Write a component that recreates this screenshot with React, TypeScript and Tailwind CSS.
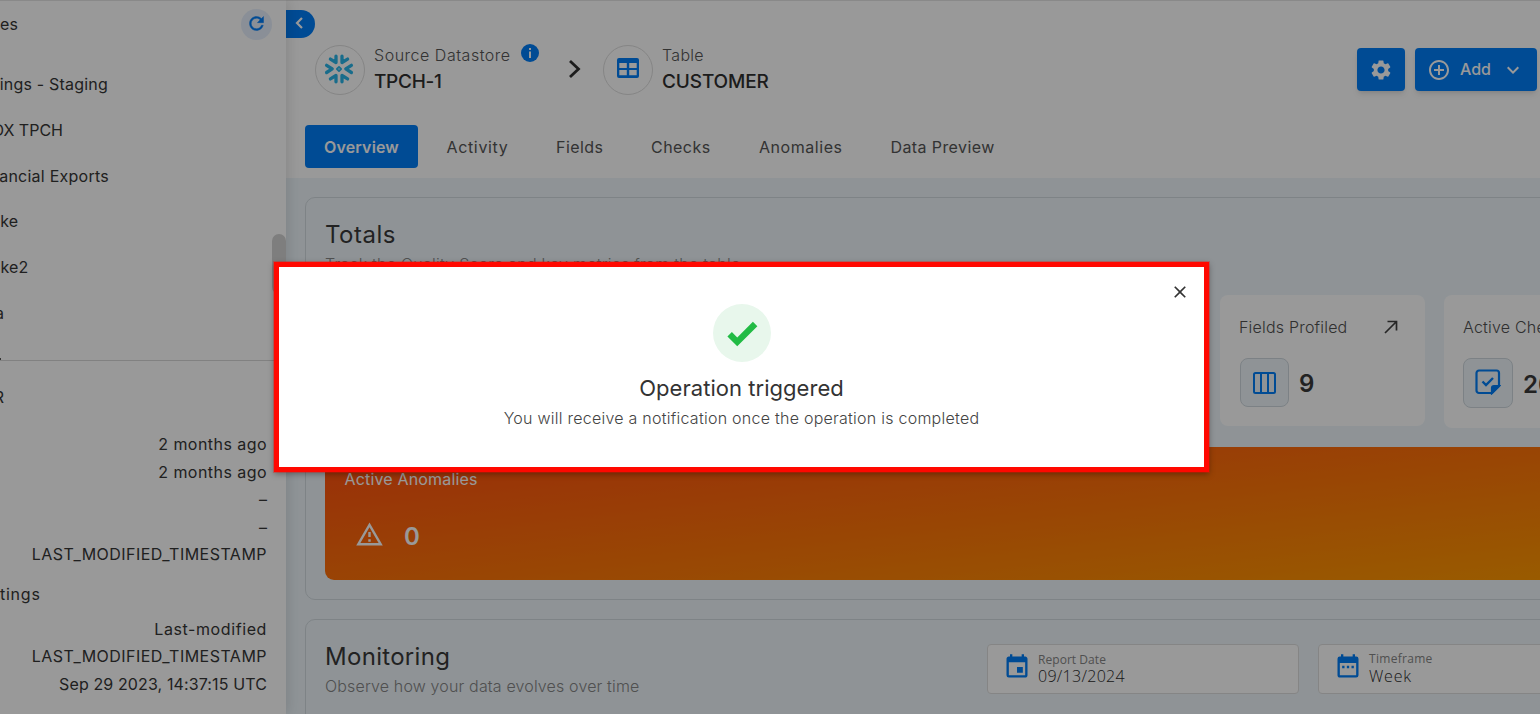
import React from "react";
import { MdSettings, MdControlPoint, MdKeyboardArrowDown, MdEvent, MdClose } from "react-icons/md";

const BLUE = "text-[#007df7]";

function SnowflakeLogo() {
  return (
    <svg width="30" height="30" viewBox="-15 -15 30 30" fill="none" stroke="#29b5e8" strokeWidth="3.3" strokeLinecap="round" strokeLinejoin="round">
      <path d="M-12.400 -3.700L-6.800 -.1L-12.400 3.500M12.400 -3.700L6.800 -.1L12.400 3.500" />
      <path d="M-3 -12.800V-6.500L-8.600 -9.900M3 -12.800V-6.500L8.600 -9.900M-3 12.800V6.500L-8.600 9.900M3 12.800V6.500L8.600 9.900" />
      <path d="M0 -2.100L2.100 0L0 2.100L-2.100 0Z" strokeWidth="1.800" />
    </svg>
  );
}

function RefreshIcon() {
  return (
    <svg width="21" height="21" viewBox="0 0 24 24" fill="currentColor" stroke="currentColor" strokeWidth="0.5">
      <path d="M17.650 6.350C16.200 4.900 14.210 4 12 4c-4.420 0-7.990 3.580-7.990 8s3.570 8 7.990 8c3.730 0 6.840-2.550 7.730-6h-2.080c-.82 2.330-3.040 4-5.650 4-3.310 0-6-2.690-6-6s2.690-6 6-6c1.660 0 3.140.69 4.220 1.780L13 11h7V4l-2.350 2.350z" />
    </svg>
  );
}

function TableIcon() {
  return (
    <svg width="22" height="20" viewBox="0 0 22 20" fill="#007df7" fillRule="evenodd">
      <path d="M2 0H20A2 2 0 0 1 22 2V18A2 2 0 0 1 20 20H2A2 2 0 0 1 0 18V2A2 2 0 0 1 2 0ZM2.300 5V10H9.800V5ZM12.200 5V10H19.700V5ZM2.300 12V17.300H9.800V12ZM12.200 12V17.300H19.700V12Z" />
    </svg>
  );
}

function ColumnsIcon() {
  return (
    <svg width="23" height="22" viewBox="0 0 23 22" fill="none" stroke="#007df7" strokeWidth="2">
      <rect x="1" y="1" width="21" height="20" rx="1.500" />
      <path d="M8 1V21M15 1V21" />
    </svg>
  );
}

function CheckNoteIcon() {
  return (
    <svg width="26" height="26" viewBox="0 0 26 26" fill="none" stroke="#007df7" strokeWidth="2.200">
      <path d="M17 24H4A2.500 2.500 0 0 1 1.500 21.500V4A2.500 2.500 0 0 1 4 1.500H21.500A2.500 2.500 0 0 1 24 4V17Z" />
      <path d="M17 24V19A2 2 0 0 1 19 17H24Z" fill="#007df7" />
      <path d="M7.500 12.500L11 16L18 9" strokeWidth="2.400" />
    </svg>
  );
}

function CalendarWeekIcon() {
  return (
    <svg width="28" height="28" viewBox="0 0 24 24" fill="#007df7">
      <path d="M19 3h-1V1h-2v2H8V1H6v2H5a2 2 0 0 0-2 2v14c0 1.100.9 2 2 2h14a2 2 0 0 0 2-2V5a2 2 0 0 0-2-2zm0 16H5V8.500h14V19zM7 11h2v2H7zM11 11h2v2h-2zM15 11h2v2h-2z" />
    </svg>
  );
}

const sources = [
  { text: "ings - Staging", w: "w-[108px] tracking-[0.2px]" },
  { text: "DX TPCH", w: "w-[63px]" },
  { text: "ancial Exports", w: "w-[109px] tracking-[0.25px]" },
  { text: "ke", w: "w-[18.5px] tracking-[0.3px]" },
  { text: "ke2", w: "w-[28.5px] tracking-[0.2px]" },
  { text: "a", w: "w-[4px]" },
];

const details = [
  { text: "2 months ago", track: "tracking-[0.45px]" },
  { text: "2 months ago", track: "tracking-[0.45px]" },
  { text: "–", track: "tracking-normal" },
  { text: "–", track: "tracking-normal" },
  { text: "LAST_MODIFIED_TIMESTAMP", track: "tracking-[0.47px]" },
];

const settings = [
  { text: "Last-modified", track: "tracking-[0.6px]" },
  { text: "LAST_MODIFIED_TIMESTAMP", track: "tracking-[0.47px]" },
  { text: "Sep 29 2023, 14:37:15 UTC", track: "tracking-[0.12px]" },
];

function Sidebar() {
  return (
    <aside className="z-10 flex w-[286px] shrink-0 flex-col overflow-hidden bg-white text-base text-[#363636] shadow-[2px_0_12px_rgba(0,0,0,0.12)]">
      <div className="relative flex h-[360px] flex-col">
        <div className="flex h-[48px] shrink-0 items-center justify-between pr-[14px]">
          <span className="tracking-[0.2px]">es</span>
          <span className={`flex size-[31px] items-center justify-center rounded-full bg-[#e6effc] pb-[2px] ${BLUE}`}>
            <RefreshIcon />
          </span>
        </div>
        <ul className="flex flex-col pt-[13.500px]">
          {sources.map((s) => (
            <li key={s.text} className="flex h-[45.700px] items-center">
              <span className={`flex justify-end overflow-hidden whitespace-nowrap ${s.w}`}>{s.text}</span>
            </li>
          ))}
        </ul>
        <span className="absolute top-[358px] left-0 h-[2px] w-px bg-[#555]" />
        <span className="absolute top-[234px] right-0 h-[60px] w-[14px] rounded-full bg-[#d2d2d2]" />
      </div>
      <div className="flex flex-col border-t border-[#d8d8d8] pr-[19px] leading-[27.500px]">
        <span className="mt-[23px] flex h-[28px] w-[4px] justify-end overflow-hidden">R</span>
        <div className="mt-[19px] flex flex-col items-end">
          {details.map((d, i) => (
            <span key={i} className={d.track}>{d.text}</span>
          ))}
        </div>
        <span className="mt-[12px] tracking-[0.75px]">tings</span>
        <div className="mt-[7.500px] flex flex-col items-end">
          {settings.map((d) => (
            <span key={d.text} className={d.track}>{d.text}</span>
          ))}
        </div>
      </div>
    </aside>
  );
}

function Header() {
  return (
    <header className="relative flex h-[178px] shrink-0 flex-col bg-white">
      <span className="absolute top-[10px] left-0 flex h-[28px] w-[29px] items-center justify-center rounded-r-full bg-[#007df7] pr-[3px] pb-[2px] text-white">
        <svg width="8" height="12" viewBox="0 0 8 12" fill="none" stroke="currentColor" strokeWidth="2.200">
          <path d="M7 1L2 6L7 11" />
        </svg>
      </span>
      <div className="flex h-[95px] items-end pl-[29px]">
        <span className="flex size-[50px] items-center justify-center rounded-full border border-[#dedede] pr-[2px] pb-[2px]">
          <SnowflakeLogo />
        </span>
        <div className="ml-[9px] flex h-[50px] w-[166px] flex-col">
          <div className="flex h-[20px] items-center text-[#555]">
            <span className="w-[147px] text-base font-light tracking-[0.52px]">Source Datastore</span>
            <span className="-mt-[4px] flex size-[18px] shrink-0 items-center justify-center rounded-full bg-[#007df7]">
              <svg width="4" height="10" viewBox="0 0 4 10" fill="#fff">
                <path d="M1 0H3V2H1ZM1 3.500H3V10H1Z" />
              </svg>
            </span>
          </div>
          <span className="mt-[2px] text-[19px] leading-[30px] font-medium tracking-[-0.3px] text-[#2f2f2f]">TPCH-1</span>
        </div>
        <svg className="mb-[16px] ml-[28px] shrink-0" width="14" height="20" viewBox="0 0 14 20" fill="none" stroke="#303030" strokeWidth="2.800">
          <path d="M2 2L10.500 10L2 18" />
        </svg>
        <span className="ml-[21px] flex size-[50px] items-center justify-center rounded-full border border-[#dedede] pb-[4px]">
          <TableIcon />
        </span>
        <div className="ml-[9px] flex h-[50px] flex-col">
          <span className="h-[21px] text-base leading-[21px] font-light tracking-[0.3px] text-[#555]">Table</span>
          <span className="mt-[1px] text-[19px] leading-[30px] font-medium tracking-[-0.12px] text-[#2f2f2f]">CUSTOMER</span>
        </div>
        <div className="mr-[3px] mb-[4px] ml-auto flex gap-[10px] text-white">
          <span className="flex h-[43px] w-[48px] items-center justify-center rounded-[4px] bg-[#007df7] shadow-md">
            <MdSettings size={24} />
          </span>
          <span className="flex h-[43px] w-[122px] items-center rounded-[4px] bg-[#007df7] pl-[12px] shadow-md">
            <MdControlPoint size={24} />
            <span className="-mt-[2px] ml-[9px] w-[40px] text-base font-medium">Add</span>
            <MdKeyboardArrowDown size={24} className="ml-[1px]" />
          </span>
        </div>
      </div>
      <nav className="mt-[30px] ml-[19px] flex h-[43px] items-center text-base tracking-[0.45px] text-[#555]">
        <span className="flex h-[43px] w-[113px] items-center justify-center rounded-[4px] bg-[#007df7] font-semibold tracking-[0.15px] text-white">Overview</span>
        <span className="ml-[28.500px] w-[109.500px] tracking-[0.65px]">Activity</span>
        <span className="w-[95px]">Fields</span>
        <span className="w-[108px]">Checks</span>
        <span className="w-[131.500px] tracking-[0.55px]">Anomalies</span>
        <span className="tracking-[0.4px]">Data Preview</span>
      </nav>
    </header>
  );
}

function TotalsPanel() {
  return (
    <section className="flex h-[403px] w-[1400px] shrink-0 flex-col rounded-[10px] border border-[#d3dbe0] pt-[22px] pl-[19px]">
      <h2 className="text-2xl leading-[30px] tracking-[0.5px] text-[#3a3a3a]">Totals</h2>
      <p className="mt-[3px] text-base leading-[22px] font-light tracking-[0.23px] text-[#858585]">Track the Quality Score and key metrics from the table</p>
      <div className="mt-[20px] flex h-[133px] items-start pl-[895px]">
        <div className="h-[131px] w-[205px] rounded-[8px] bg-white pt-[20px] pl-[20px]">
          <div className="flex h-[24px] items-center text-[#505050]">
            <span className="-ml-[1px] w-[144px] font-light tracking-[0.2px]">Fields Profiled</span>
            <svg width="16" height="16" viewBox="0 0 16 16" fill="none" stroke="#404040" strokeWidth="1.700">
              <path d="M2 14L13 3M4.500 2.500H13.500V11.500" />
            </svg>
          </div>
          <div className="mt-[19px] flex items-center">
            <span className="flex size-[49px] items-center justify-center rounded-[8px] border border-[#cfd8de] bg-[#eef6fb] pr-[1px]">
              <ColumnsIcon />
            </span>
            <span className="mt-[2px] ml-[10px] text-2xl font-semibold text-[#3a3a3a]">9</span>
          </div>
        </div>
        <div className="ml-[19px] h-[133px] w-[205px] rounded-[8px] bg-white pt-[20px] pl-[19px]">
          <div className="flex h-[24px] items-center font-light tracking-[0.2px] text-[#505050]">Active Checks</div>
          <div className="mt-[19px] flex items-center">
            <span className="flex size-[50px] items-center justify-center rounded-[8px] border border-[#cfd8de] bg-[#eef6fb] pb-[2px]">
              <CheckNoteIcon />
            </span>
            <span className="mt-[3px] ml-[10px] text-2xl font-semibold text-[#3a3a3a]">26</span>
          </div>
        </div>
      </div>
      <div className="mt-[19px] flex h-[133px] w-[1345px] flex-col rounded-[9px] bg-[linear-gradient(173.5deg,#ff4c10,#ff9c00)] pt-[20px] pl-[19.500px] text-white">
        <span className="text-base leading-6 tracking-[0.17px]">Active Anomalies</span>
        <div className="mt-[27px] flex items-center pl-[10.500px]">
          <svg width="29" height="29" viewBox="0 0 24 24" fill="currentColor" className="-mt-[3px]">
            <path d="M12,2L1,21H23M12,6L19.530,19H4.470M11,10V14H13V10M11,16V18H13V16" />
          </svg>
          <span className="mt-[3px] ml-[20px] text-2xl font-semibold">0</span>
        </div>
      </div>
    </section>
  );
}

function Field({ icon, label, value, tight }: { icon: React.ReactNode; label: string; value: string; tight?: boolean }) {
  return (
    <div className="flex h-[50px] w-[312px] items-start rounded-[4px] border border-[#dedede] bg-white pt-[7px] pl-[15px]">
      <span className={`mt-[1px] ${BLUE}`}>{icon}</span>
      <div className={`ml-[7px] flex flex-col font-['Open_Sans',sans-serif] ${tight ? "-mt-[1px]" : ""}`}>
        <span className={`text-xs leading-[15px] text-[#858585] ${tight ? "tracking-[0.3px]" : "tracking-[0.05px]"}`}>{label}</span>
        <span className={`text-base leading-[18px] font-light text-[#2c2c2c] ${tight ? "mt-[1px] tracking-[0.8px]" : "tracking-[0.3px]"}`}>{value}</span>
      </div>
    </div>
  );
}

function MonitoringPanel() {
  return (
    <section className="mt-[19px] flex h-[200px] w-[1400px] shrink-0 rounded-[10px] border border-[#d3dbe0] pl-[19px]">
      <div className="w-[662px] pt-[22px]">
        <h2 className="text-2xl leading-[30px] tracking-[0.3px] text-[#3a3a3a]">Monitoring</h2>
        <p className="mt-[3px] text-base leading-[22px] font-light tracking-[0.15px] text-[#858585]">Observe how your data evolves over time</p>
      </div>
      <div className="flex gap-[19px] pt-[24px]">
        <Field icon={<MdEvent size={28} />} label="Report Date" value="09/13/2024" />
        <Field icon={<CalendarWeekIcon />} label="Timeframe" value="Week" tight />
      </div>
    </section>
  );
}

function Dialog() {
  return (
    <div role="dialog" className="absolute top-[262px] left-[274px] z-30 flex h-[210px] w-[935px] flex-col items-center border-5 border-[#ff0800] bg-white pt-[37px] shadow-[0_2px_6px_rgba(0,0,0,0.35)] outline outline-[#ff0800]/30">
      <MdClose size={20} className="absolute top-[15px] right-[14px] text-[#333]" />
      <span className="flex size-[58px] items-center justify-center rounded-full bg-[#e8f7ec]">
        <svg width="38" height="38" viewBox="0 0 24 24" fill="#22bb45">
          <path d="M9,20.420L2.790,14.210L5.620,11.380L9,14.770L18.880,4.880L21.710,7.710L9,20.420Z" />
        </svg>
      </span>
      <h3 className="mt-[11px] text-[22px] leading-[30px] tracking-[0.04px] text-[#333]">Operation triggered</h3>
      <p className="mt-[3px] text-base leading-[24px] font-light tracking-[0.25px] text-[#444]">You will receive a notification once the operation is completed</p>
    </div>
  );
}

export default function App() {
  return (
    <div className="relative flex h-[714px] w-[1540px] overflow-hidden bg-white font-[Inter,sans-serif] whitespace-nowrap">
      <Sidebar />
      <div className="flex min-w-0 flex-1 flex-col overflow-hidden bg-[#eef6fb]">
        <Header />
        <main className="flex min-h-0 flex-1 flex-col overflow-hidden pt-[19px] pl-[19px]">
          <TotalsPanel />
          <MonitoringPanel />
        </main>
      </div>
      <div className="absolute inset-0 z-20 border-t border-black/10 bg-black/40" />
      <Dialog />
    </div>
  );
}
